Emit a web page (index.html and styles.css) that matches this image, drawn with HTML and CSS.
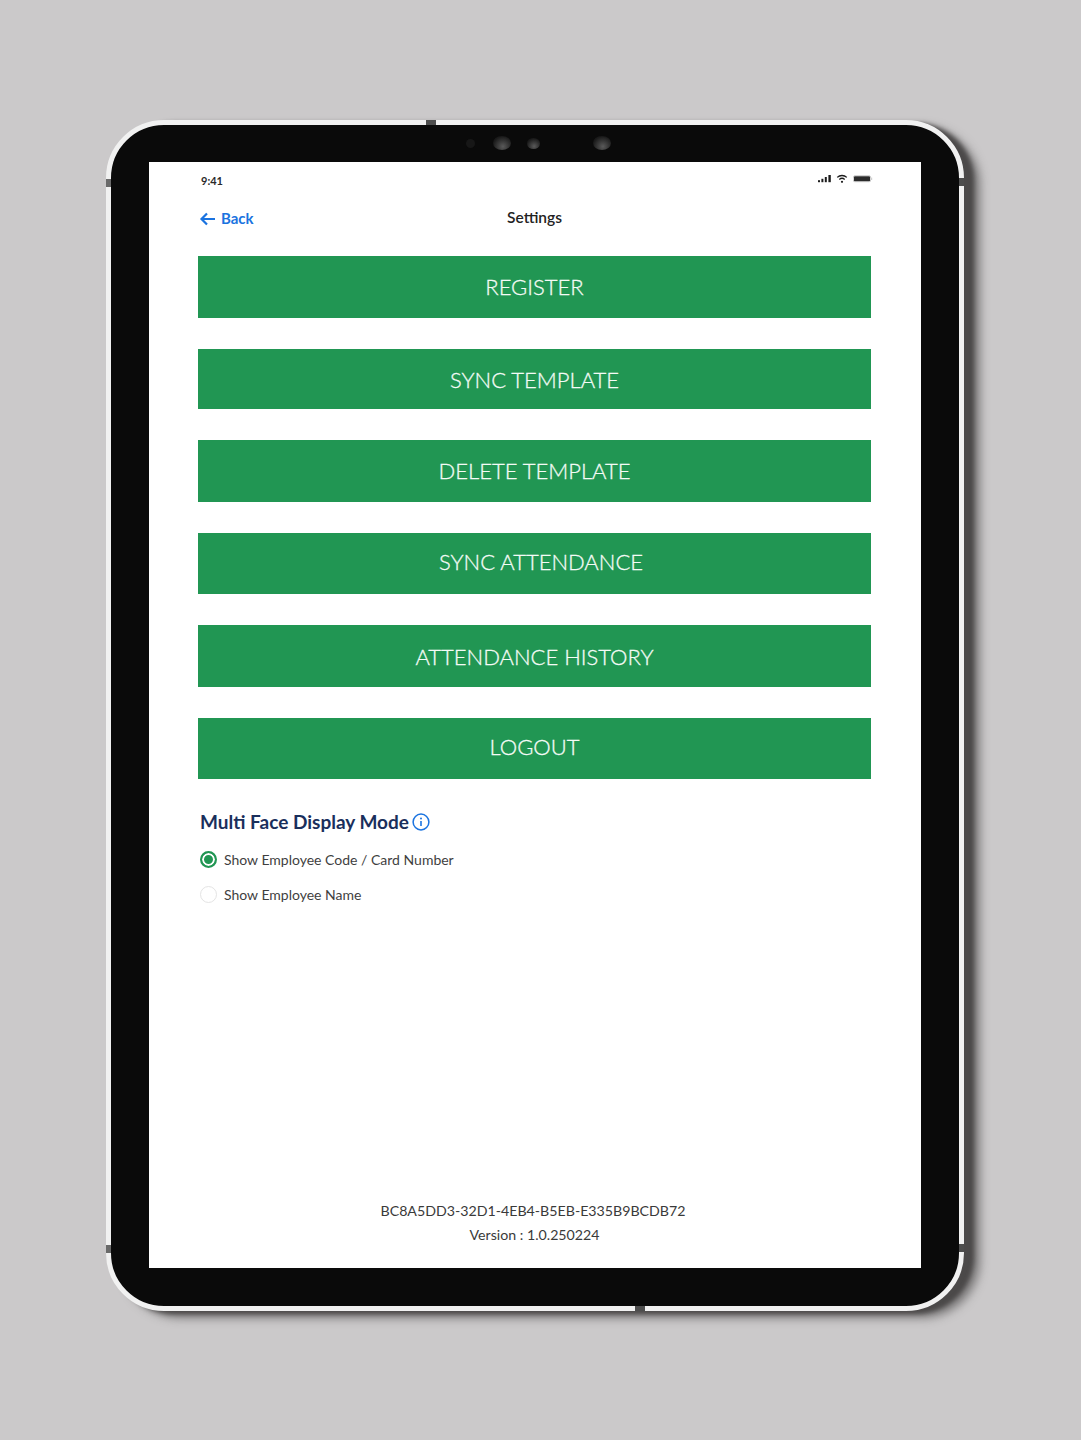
FILE: index.html
```html
<!DOCTYPE html>
<html lang="en">
<head>
<meta charset="utf-8">
<title>Settings</title>
<link rel="stylesheet" href="styles.css">
</head>
<body>
<div class="device">
  <span class="notch notch-top"></span>
  <span class="notch notch-bottom"></span>
  <span class="notch notch-lt"></span>
  <span class="notch notch-lb"></span>
  <span class="notch notch-rt"></span>
  <span class="notch notch-rb"></span>
  <div class="cameras">
    <span class="cam cam-dim"></span>
    <span class="cam cam-big"></span>
    <span class="cam cam-mid"></span>
    <span class="cam cam-big cam-far"></span>
  </div>
  <main class="screen">
    <div class="status">
      <span class="time">9:41</span>
      <svg class="status-icons" width="55" height="10" viewBox="0 0 55 10" aria-hidden="true">
        <g fill="#1c1c1c">
          <rect x="0" y="6.2" width="2" height="2"/>
          <rect x="3.4" y="4.8" width="2" height="3.4"/>
          <rect x="6.8" y="3" width="2" height="5.2"/>
          <rect x="10.4" y="1" width="2.4" height="7.2"/>
          <circle cx="24" cy="7.8" r="1.1"/>
        </g>
        <g fill="none" stroke="#1c1c1c" stroke-width="1.3">
          <path d="M19.2 3.4a7 7 0 0 1 9.6 0"/>
          <path d="M21.3 5.5a4 4 0 0 1 5.4 0"/>
        </g>
        <rect x="35.5" y="1.8" width="17" height="6" rx="1.4" fill="#2b2b2b" stroke="#d9d9d9" stroke-width="1"/>
        <rect x="53" y="3.6" width="1.2" height="2.4" fill="#cfcfcf"/>
      </svg>
    </div>
    <header class="nav">
      <a class="back">
        <svg class="back-icon" width="17" height="14" viewBox="0 0 17 14" aria-hidden="true"><path d="M16 7H2.5M8 1.5 2.5 7 8 12.5" fill="none" stroke="#1a73e0" stroke-width="2.2"/></svg>
        Back
      </a>
      <h1 class="title">Settings</h1>
    </header>
    <div class="actions">
      <button class="btn h62 lift1">REGISTER</button>
      <button class="btn h60">SYNC TEMPLATE</button>
      <button class="btn h62 lift1">DELETE TEMPLATE</button>
      <button class="btn h61 shift">SYNC ATTENDANCE</button>
      <button class="btn h62">ATTENDANCE HISTORY</button>
      <button class="btn h61 lift2">LOGOUT</button>
    </div>
    <section class="mode">
      <h2 class="mode-title">Multi Face Display Mode
        <svg class="info" width="18" height="18" viewBox="0 0 18 18" aria-hidden="true"><circle cx="9" cy="9" r="7.9" fill="none" stroke="#1a73e0" stroke-width="1.5"/><path d="M9 8v5" stroke="#1a73e0" stroke-width="1.6" fill="none"/><circle cx="9" cy="5.4" r="1" fill="#1a73e0"/></svg>
      </h2>
      <label class="option">
        <span class="radio radio-on"></span>Show Employee Code / Card Number
      </label>
      <label class="option">
        <span class="radio"></span>Show Employee Name
      </label>
    </section>
    <footer class="foot">
      <p class="device-id">BC8A5DD3-32D1-4EB4-B5EB-E335B9BCDB72</p>
      <p class="version">Version : 1.0.250224</p>
    </footer>
  </main>
</div>
</body>
</html>
```
FILE: styles.css
```css
* { box-sizing: border-box; }
html, body { margin: 0; height: 1440px; overflow: hidden; }
body {
  background: #cbc9ca;
  font-family: "Lato", "Open Sans", sans-serif;
  padding: 120px 0 0 106px;
}
.device {
  position: relative;
  width: 858px;
  height: 1191px;
  padding: 37px 38px 38px;
  background: #0a0a0a;
  border: 5px solid #f1f1f1;
  border-radius: 58px;
  box-shadow: 10px 3px 4px rgba(70, 68, 68, .9), 16px 7px 10px rgba(70, 68, 68, .6);
}
.notch { position: absolute; background: #4d4d4d; }
.notch-top { top: -5px; left: 315px; width: 10px; height: 5px; }
.notch-bottom { bottom: -5px; left: 524px; width: 10px; height: 5px; }
.notch-lt { left: -5px; top: 54px; width: 5px; height: 8px; background: #6a6a6a; }
.notch-lb { left: -5px; top: 1120px; width: 5px; height: 8px; background: #6a6a6a; }
.notch-rt { right: -5px; top: 53px; width: 5px; height: 8px; }
.notch-rb { right: -5px; top: 1119px; width: 5px; height: 8px; }
.cameras {
  position: absolute;
  top: 11px;
  left: 355px;
  display: flex;
  align-items: center;
  height: 14px;
}
.cam { display: block; border-radius: 50%; background: radial-gradient(circle at 55% 75%, #5a5a5a, #1a1a1a 70%); }
.cam-dim { width: 9px; height: 9px; background: #171717; margin-right: 18px; }
.cam-big { width: 18px; height: 14px; }
.cam-mid { width: 13px; height: 11px; margin-left: 16px; }
.cam-far { margin-left: 53px; }
.screen {
  position: relative;
  display: flex;
  flex-direction: column;
  width: 772px;
  height: 1106px;
  background: #fff;
  padding: 0 50px 0 49px;
}
.status {
  display: flex;
  justify-content: space-between;
  align-items: center;
  height: 14px;
  margin-top: 11px;
  padding-left: 3px;
}
.time { font-size: 11px; font-weight: 700; color: #2a2a2a; }
.status-icons { display: block; margin: -3px -2px 0 0; }
.nav {
  position: relative;
  display: flex;
  justify-content: center;
  align-items: center;
  height: 20px;
  margin-top: 21px;
}
.back {
  position: absolute;
  left: 1px;
  top: 0;
  display: flex;
  align-items: center;
  gap: 5px;
  color: #1a73e0;
  font-size: 15px;
  font-weight: 700;
  line-height: 20px;
}
.back-icon { display: block; margin-top: 2px; }
.title { margin: -2px 0 0; font-size: 15.5px; font-weight: 600; color: #222; line-height: 20px; }
.actions {
  display: flex;
  flex-direction: column;
  gap: 31px;
  margin-top: 28px;
}
.btn {
  display: block;
  width: 100%;
  border: 0;
  padding: 0;
  background: #219653;
  color: #f4fbf6;
  font-family: inherit;
  font-size: 22px;
  font-weight: 300;
  -webkit-text-stroke: .3px #f4fbf6;
  text-align: center;
}
.h60 { height: 60px; }
.h61 { height: 61px; }
.h62 { height: 62px; }
.lift1 { padding-bottom: 2px; }
.lift2 { padding-bottom: 5px; }
.shift { padding: 0 0 4px 13px; }
.mode { margin-top: 28px; padding-left: 2px; }
.mode-title {
  display: flex;
  align-items: center;
  gap: 3px;
  margin: 0;
  height: 28px;
  font-size: 19px;
  font-weight: 700;
  color: #1a2f5c;
}
.info { display: block; margin-top: 1px; }
.option {
  display: flex;
  align-items: center;
  gap: 7px;
  height: 19px;
  margin-top: 16px;
  font-size: 14px;
  color: #3f3f3f;
}
.mode-title + .option { margin-top: 15px; }
.radio {
  display: block;
  width: 17px;
  height: 17px;
  border-radius: 50%;
  border: 1.5px solid #e4e4e4;
  background: #fff;
}
.radio-on { border: 2px solid #219653; box-shadow: inset 0 0 0 2px #fff; background: #219653; }
.foot {
  margin-top: auto;
  padding-bottom: 21px;
  text-align: center;
  font-size: 14.2px;
  color: #3a3a3a;
  line-height: 24px;
}
.foot p { margin: 0; }
.device-id { padding-right: 3px; }
```
